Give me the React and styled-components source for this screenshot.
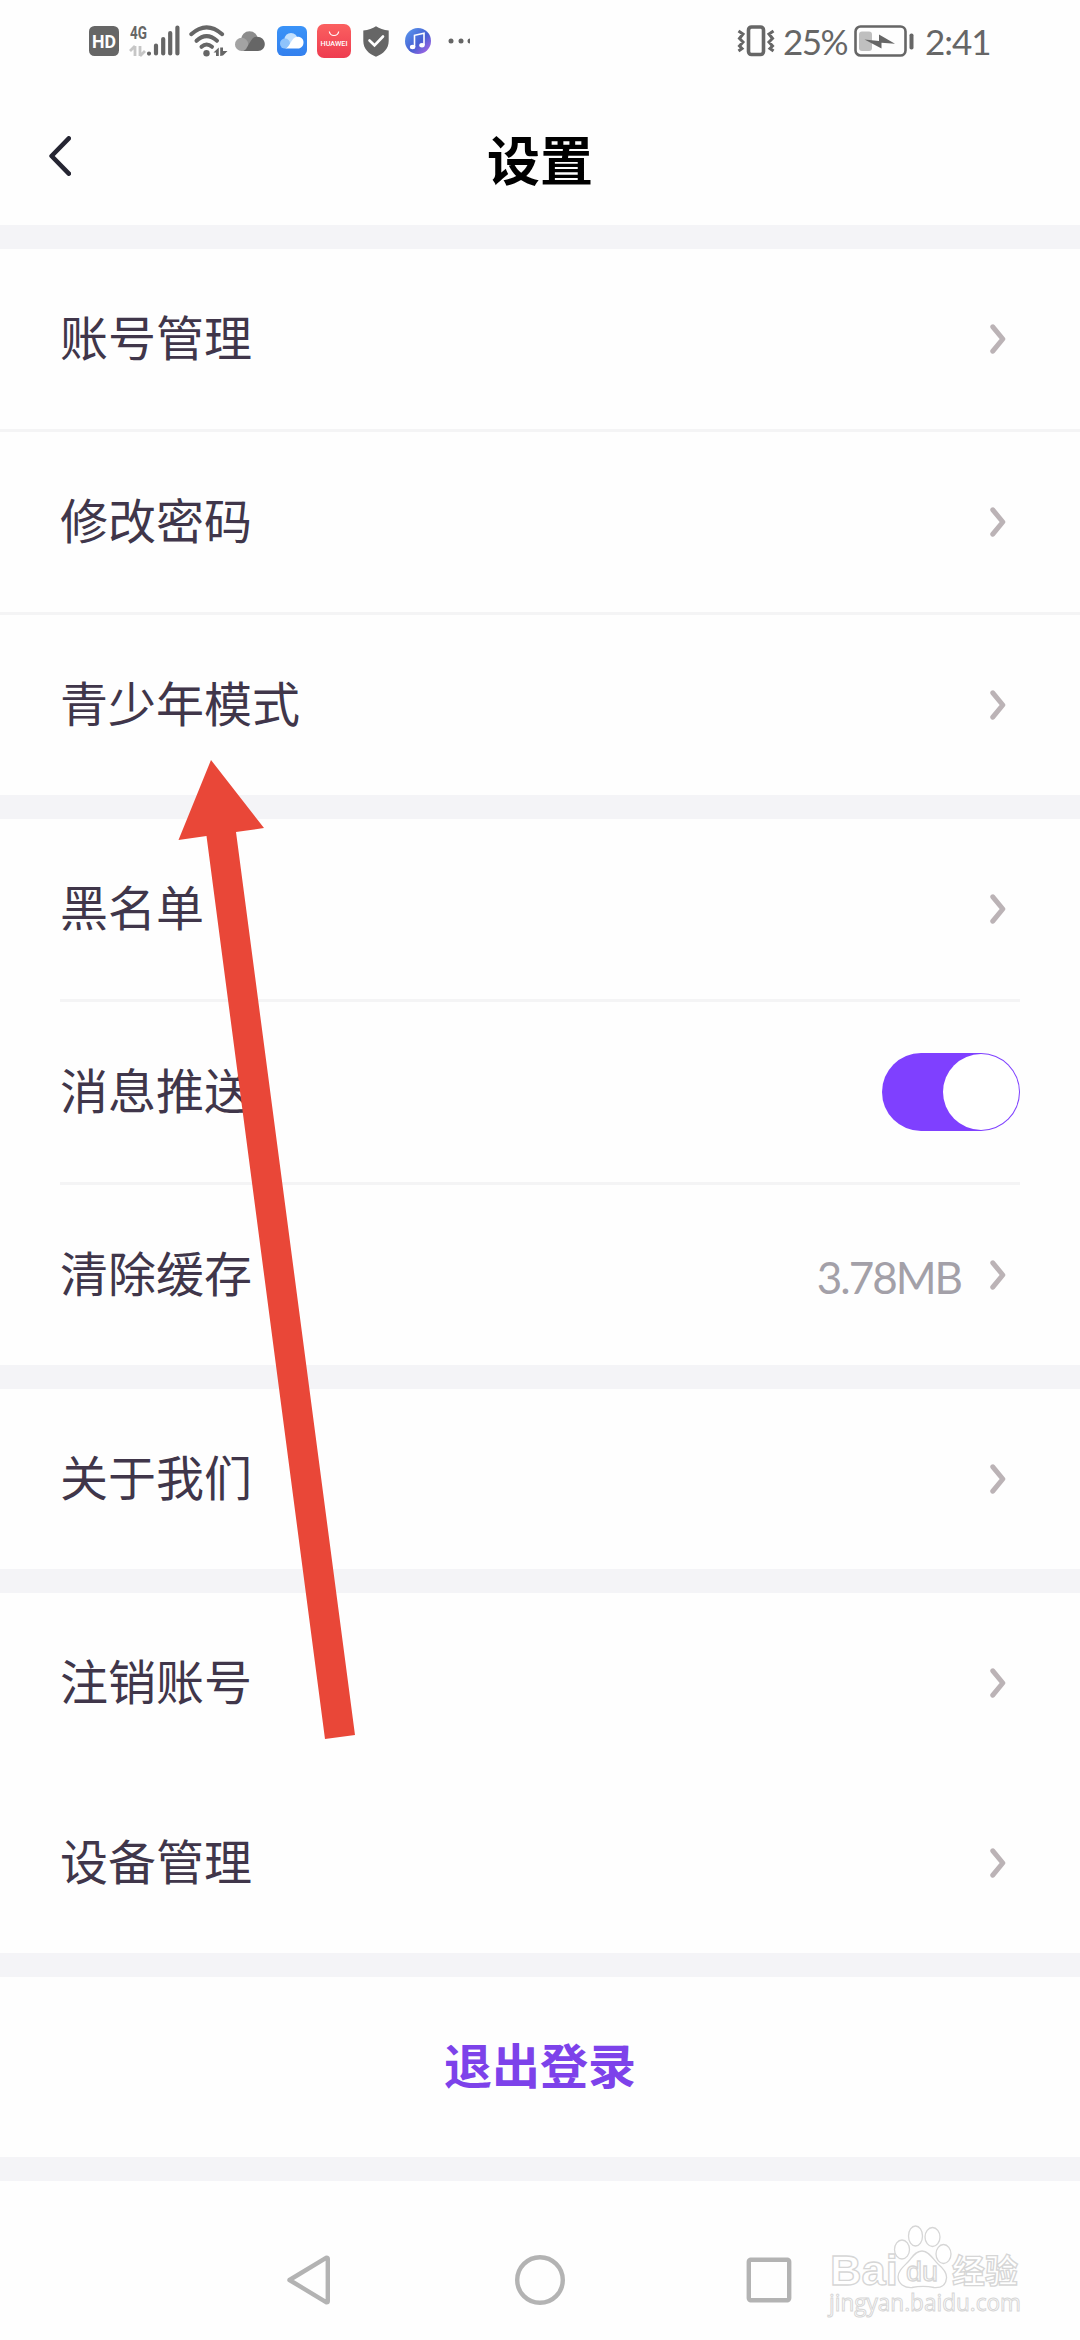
import React, {useState} from 'react';
import styled, {createGlobalStyle} from 'styled-components';

const App = () => {
    const [push, setPush] = useState(true);

    return (
        <Page>
            <GlobalStyle />
            <StatusBar />
            <Header>
                <BackButton aria-label="返回">
                    <svg width="22" height="40" viewBox="0 0 22 40">
                        <path d="M19.8 2.4 L2.6 20 L19.8 37.6" />
                    </svg>
                </BackButton>
                <Title>设置</Title>
            </Header>
            <Group $line="full">
                <Row label="账号管理" />
                <Row label="修改密码" />
                <Row label="青少年模式" />
            </Group>
            <Group $line="inset">
                <Row label="黑名单" />
                <Row label="消息推送">
                    <Switch role="switch" aria-checked={push} $on={push} onClick={() => setPush(!push)}>
                        <Knob />
                    </Switch>
                </Row>
                <Row label="清除缓存" value="3.78MB" />
            </Group>
            <Group>
                <Row label="关于我们" />
            </Group>
            <Group>
                <Row label="注销账号" />
                <Row label="设备管理" />
            </Group>
            <Group>
                <Logout>退出登录</Logout>
            </Group>
            <NavBar>
                <svg width="49" height="50" viewBox="0 0 49 50">
                    <path d="M2.5 25 L39.5 2.6 Q40.8 2.6 40.8 4 V46 Q40.8 47.4 39.5 47.4 Z" />
                </svg>
                <svg width="50" height="50" viewBox="0 0 50 50">
                    <circle cx="25" cy="25" r="22.8" />
                </svg>
                <svg width="46" height="46" viewBox="0 0 46 46">
                    <rect x="2.8" y="2.8" width="40.4" height="40.4" rx="2" />
                </svg>
            </NavBar>
            <Pointer viewBox="0 0 90 982">
                <path d="M34 2 L87 70 L59 74 L178 977 L148 981 L29.5 78 L1.5 82 Z" />
            </Pointer>
            <Watermark />
        </Page>
    )
}

const Row = ({label, value, children}) => (
    <RowBox>
        <Label>{label}</Label>
        {value && <Value>{value}</Value>}
        {children || (
            <Chevron viewBox="0 0 16 30">
                <path d="M2.8 2.8 L12.8 15 L2.8 27.2" />
            </Chevron>
        )}
    </RowBox>
)

const StatusBar = () => (
    <Status>
        <Icon $w={30} $h={30} viewBox="0 0 30 30">
            <rect width="30" height="30" rx="5.5" fill="#666" />
            <text x="15" y="21.5" fontSize="18" fontWeight="700" fill="#fff" textAnchor="middle" textLength="24" lengthAdjust="spacingAndGlyphs">HD</text>
        </Icon>
        <Icon $w={50} $h={32} $gap={11} viewBox="0 0 50 32">
            <text x="0" y="13.5" fontSize="18.5" fontWeight="700" fill="#666" textLength="17" lengthAdjust="spacingAndGlyphs">4G</text>
            <path d="M5 21 V31 M0 26 L5 21 M10 21 V31 M15 26 L10 31" stroke="#c6c6c6" strokeWidth="2.8" fill="none" />
            <path d="M19 28.5 V28.6 M26 20.5 V28.5 M33.2 14 V28.5 M40.2 8 V28.5 M47.4 2.5 V28.5" stroke="#666" strokeWidth="4.2" strokeLinecap="round" />
        </Icon>
        <Icon $w={39} $h={32} $gap={9} viewBox="0 0 39 32">
            <g stroke="#666" strokeWidth="4" fill="none" strokeLinecap="round">
                <path d="M2.2 9.2 Q17.5 -4.6 33.2 9.2" />
                <path d="M7.5 15.8 Q17.5 6.6 28 15.8" />
                <path d="M12.5 21.8 Q17.5 17.2 23 21.8" />
            </g>
            <circle cx="17.5" cy="28.2" r="3.2" fill="#666" />
            <path d="M24.5 27.5 L29.8 22.5 V31 H27 V27.5 Z M31.2 22.5 H34 V26 H38.5 L34 30.5 L31.2 31 Z" fill="#666" />
        </Icon>
        <Icon $w={30} $h={20} $gap={7} viewBox="0 0 30 20">
            <circle cx="14.5" cy="8.7" r="8.5" fill="#8c8c8c" />
            <circle cx="6.6" cy="13.4" r="6.6" fill="#a3a3a3" />
            <path d="M6.6 20 C11 20 12 16 14.5 12 C17 8 18.5 5.8 22 5.8 C26.5 5.8 29.8 9 29.8 13 C29.8 17 27 20 23 20 Z" fill="#666" />
        </Icon>
        <Icon $w={30} $h={30} $gap={12} viewBox="0 0 30 30">
            <defs>
                <linearGradient id="sky" x2="0" y2="1">
                    <stop stopColor="#3a93f8" />
                    <stop offset="1" stopColor="#3380ee" />
                </linearGradient>
            </defs>
            <rect width="30" height="30" rx="6" fill="url(#sky)" />
            <circle cx="14" cy="13.5" r="6.6" fill="#c3e0fd" />
            <circle cx="8" cy="17.6" r="5" fill="#8fc3fb" />
            <path d="M8 22.5 C13 22.5 14 10.8 20.5 10.8 C24.5 10.8 26.5 13.5 26.5 16.5 C26.5 20 24 22.5 21 22.5 Z" fill="#fff" />
        </Icon>
        <Icon $w={34} $h={34} $gap={10} viewBox="0 0 34 34">
            <defs>
                <linearGradient id="gallery" x2="0" y2="1">
                    <stop stopColor="#fb6060" />
                    <stop offset="1" stopColor="#ee3c50" />
                </linearGradient>
            </defs>
            <rect width="34" height="34" rx="7" fill="url(#gallery)" />
            <path d="M12.3 7.5 Q13 11.5 17 11.5 Q21 11.5 21.7 7.5" stroke="#fff" strokeWidth="1.2" fill="none" />
            <text x="17" y="21.8" fontSize="6.8" fontWeight="500" fill="#fff" textAnchor="middle" textLength="27" lengthAdjust="spacingAndGlyphs">HUAWEI</text>
        </Icon>
        <Icon $w={26} $h={31} $gap={12} viewBox="0 0 26 31">
            <path d="M13 0.3 Q18 3.8 25.7 4.5 V15 C25.7 23 20 28 13 30.7 C6 28 0.3 23 0.3 15 V4.5 Q8 3.8 13 0.3 Z" fill="#666" />
            <path d="M6.5 14.5 L11.5 19.3 L20 10.5" stroke="#fff" strokeWidth="2.6" fill="none" strokeLinecap="round" />
        </Icon>
        <Icon $w={26} $h={26} $gap={16} viewBox="0 0 26 26">
            <defs>
                <linearGradient id="music" x2="1" y2="1">
                    <stop stopColor="#5b9bf0" />
                    <stop offset="0.55" stopColor="#4760d2" />
                    <stop offset="1" stopColor="#bd66ea" />
                </linearGradient>
            </defs>
            <circle cx="13" cy="13" r="13" fill="url(#music)" />
            <path d="M9.5 19 V7.3 L19 5.3 V17" stroke="#fff" strokeWidth="1.6" fill="none" />
            <ellipse cx="7.6" cy="19" rx="2.7" ry="2.2" fill="#fff" />
            <ellipse cx="17" cy="17.2" rx="2.7" ry="2.2" fill="#fff" />
        </Icon>
        <Icon $w={22} $h={6} $gap={17} viewBox="0 0 22 6">
            <g fill="#666">
                <circle cx="3" cy="3" r="2.5" />
                <circle cx="13" cy="3" r="2.5" />
                <path d="M22 0.5 A2.5 2.5 0 0 0 22 5.5 Z" />
            </g>
        </Icon>
        <Spacer />
        <Icon $w={38} $h={32} viewBox="0 0 38 32">
            <rect x="11.5" y="2" width="15" height="27.5" rx="3" stroke="#666" strokeWidth="3.6" fill="none" />
            <path d="M1.5 6 L6 9 L2.5 13.5 L6 17 L2.5 21 L5 23.5 L1.5 26 M36.5 6 L32 9 L35.5 13.5 L32 17 L35.5 21 L33 23.5 L36.5 26" stroke="#666" strokeWidth="3" fill="none" />
        </Icon>
        <StatusText $gap={8} $w={64} $tracking={-1.5}>25%</StatusText>
        <Icon $w={60} $h={32} $gap={7} viewBox="0 0 60 32">
            <rect x="1.5" y="1.5" width="50" height="29" rx="5" stroke="#666" strokeWidth="2.6" fill="none" />
            <rect x="5" y="6.5" width="13" height="19.5" rx="3" fill="#bfbfbf" />
            <path d="M10.5 14.5 L25 16 V9.5 L41 18.8 L27.5 17.8 V23.5 Z" fill="#666" />
            <rect x="55.5" y="8.5" width="4" height="16" rx="1.8" fill="#666" />
        </Icon>
        <StatusText $gap={11} $w={63} $tracking={-1}>2:41</StatusText>
    </Status>
)

const Watermark = () => (
    <Mark viewBox="0 0 200 100">
        <g fill="#fff" stroke="#d6d6d6" strokeWidth="1.3">
            <text x="1" y="60" fontSize="43" fontWeight="700" textLength="68" lengthAdjust="spacingAndGlyphs">Bai</text>
            <ellipse cx="73" cy="24.5" rx="7.5" ry="9.5" />
            <ellipse cx="86.5" cy="11" rx="7" ry="10" />
            <ellipse cx="103.5" cy="12" rx="7.5" ry="9.5" />
            <ellipse cx="114.5" cy="29" rx="7.5" ry="9.5" />
            <path d="M93 26 C100 26 104 34 109 39 C115 44 118 48 117.5 53 C117 60 112 63 105 62.5 C98 61 90 61 83 62.5 C75 63 69.5 59 69 52 C69 46 74 42 79 37 C83 33 86 26 93 26 Z" />
            <text x="77" y="56" fontSize="28" textLength="32" lengthAdjust="spacingAndGlyphs">du</text>
            <text x="123" y="58" fontSize="33" fontWeight="700" textLength="66">经验</text>
            <Url x="0" y="86" fontSize="24" strokeWidth="1" textLength="192" lengthAdjust="spacingAndGlyphs">jingyan.baidu.com</Url>
        </g>
    </Mark>
)

const GlobalStyle = createGlobalStyle`
    body{
        margin: 0;
        background: #fefefe;
        font-family: "Noto Sans CJK SC", sans-serif;
    }
    button{
        border: none;
        padding: 0;
        background: none;
        font-family: inherit;
    }
`;

const Page = styled.div`
    position: relative;
    display: flex;
    flex-direction: column;
    width: 1080px;
    height: 2340px;
    overflow: hidden;
    background: #fefefe;
`;

const Status = styled.div`
    display: flex;
    align-items: center;
    height: 82px;
    padding: 0 92px 0 89px;
    box-sizing: border-box;
`;

const Icon = styled.svg`
    flex: none;
    width: ${({$w}) => $w}px;
    height: ${({$h}) => $h}px;
    margin-left: ${({$gap = 0}) => $gap}px;
    overflow: visible;
    font-family: Roboto, sans-serif;
`;

const Spacer = styled.div`
    flex: 1;
`;

const StatusText = styled.span`
    width: ${({$w}) => $w}px;
    margin-left: ${({$gap}) => $gap}px;
    font-family: Lato, sans-serif;
    font-size: 35px;
    line-height: 42px;
    letter-spacing: ${({$tracking}) => $tracking}px;
    color: #666;
    white-space: nowrap;
`;

const Header = styled.header`
    display: grid;
    grid-template-columns: 120px 1fr 120px;
    align-items: center;
    height: 143px;
`;

const BackButton = styled.button`
    display: flex;
    padding: 4px 0 0 49px;
    svg{
        fill: none;
        stroke: #252532;
        stroke-width: 4.6;
        stroke-linecap: round;
        stroke-linejoin: round;
    }
`;

const Title = styled.h1`
    margin: 0;
    padding-top: 8px;
    font-size: 53px;
    line-height: 60px;
    font-weight: 700;
    text-align: center;
    color: #000;
`;

const RowBox = styled.div`
    display: flex;
    align-items: center;
    height: 180px;
    padding: 0 60px;
`;

const Group = styled.section`
    border-top: 24px solid #f4f4f7;
    ${RowBox} + ${RowBox}{
        ${({$line}) => $line && 'border-top: 3px solid #f4f4f5;'}
        ${({$line}) => $line === 'inset' && 'margin: 0 60px; padding: 0;'}
    }
`;

const Label = styled.span`
    flex: 1;
    padding-bottom: 8px;
    font-size: 48px;
    line-height: 70px;
    color: #40364a;
`;

const Value = styled.span`
    padding-top: 4px;
    margin-right: 29px;
    font-family: Lato, sans-serif;
    font-size: 44px;
    line-height: 60px;
    letter-spacing: -2px;
    color: #a3a0a8;
`;

const Chevron = styled.svg`
    width: 16px;
    height: 30px;
    margin: 0 14px 1px 0;
    fill: none;
    stroke: #bbb3b6;
    stroke-width: 5;
    stroke-linecap: round;
    stroke-linejoin: round;
`;

const Switch = styled.button`
    display: flex;
    align-items: center;
    justify-content: ${({$on}) => $on ? 'flex-end' : 'flex-start'};
    width: 138px;
    height: 78px;
    padding: 0 1px;
    border-radius: 39px;
    background: ${({$on}) => $on ? '#7f40ff' : '#d8d8dc'};
`;

const Knob = styled.span`
    width: 76px;
    height: 76px;
    border-radius: 50%;
    background: #fff;
`;

const Logout = styled.button`
    display: block;
    width: 100%;
    height: 180px;
    padding-bottom: 8px;
    font-size: 48px;
    line-height: 70px;
    font-weight: 700;
    color: #7d42ea;
`;

const NavBar = styled.nav`
    display: grid;
    grid-template-columns: 229px 229px 229px;
    justify-content: center;
    justify-items: center;
    align-items: center;
    flex: 1;
    padding-top: 39px;
    border-top: 24px solid #f4f4f7;
    svg{
        fill: none;
        stroke: #b3b3b3;
        stroke-width: 4.4;
        stroke-linejoin: round;
    }
`;

/* red guide arrow laid over the list */
const Pointer = styled.svg`
    position: absolute;
    left: 177px;
    top: 758px;
    width: 90px;
    height: 982px;
    overflow: visible;
    fill: #e94738;
    pointer-events: none;
`;

const Mark = styled.svg`
    position: absolute;
    left: 829px;
    top: 2225px;
    width: 200px;
    height: 100px;
    overflow: visible;
    font-family: "Liberation Sans", "Noto Sans CJK SC", sans-serif;
`;

const Url = styled.text`
    font-family: "Open Sans", sans-serif;
`;

export default App
